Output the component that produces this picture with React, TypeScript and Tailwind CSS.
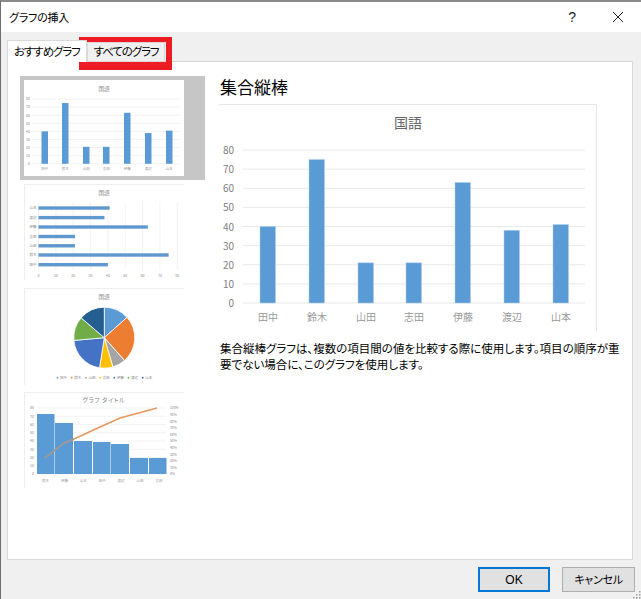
const jp = "font-['Noto_Sans_CJK_JP','Noto_Sans',sans-serif] [font-feature-settings:'palt']";
const FONT = "'Noto Sans CJK JP','Noto Sans',sans-serif";
const names = ["田中", "鈴木", "山田", "志田", "伊藤", "渡辺", "山本"];
const vals = [40, 75, 21, 21, 63, 38, 41];
const BLUE = "#5b9bd5";

function MainChart() {
  const y = (v: number) => 302 - v * 1.9125 - 104;
  const xs = [41, 90, 139, 187, 236, 285, 334];
  return (
    <svg width="378" height="226" className="block" fontFamily={FONT}>
      <text x="189" y="23" textAnchor="middle" fontSize="14" fill="#666">国語</text>
      {[0, 10, 20, 30, 40, 50, 60, 70, 80].map((v) => (
        <g key={v}>
          <line x1="24" x2="366" y1={y(v)} y2={y(v)} stroke="#e8e8e8" />
          <text x="15" y={y(v) + 4} textAnchor="end" fontSize="10" fill="#808080">{v}</text>
        </g>
      ))}
      {vals.map((v, i) => (
        <rect key={i} x={xs[i]} y={y(v)} width="15.5" height={v * 1.9125} fill={BLUE} stroke="#a9cdeb" strokeWidth="0.5" />
      ))}
      {names.map((n, i) => (
        <text key={n} x={xs[i] + 8} y="216" textAnchor="middle" fontSize="10" fill="#999">{n}</text>
      ))}
    </svg>
  );
}

function Thumb1() {
  const y = (v: number) => 19 + (80 - v) * 0.81;
  const xs = [17.5, 38, 59, 79, 100, 121, 142];
  return (
    <svg width="160" height="96" className="block bg-white" fontFamily={FONT}>
      <text x="80" y="11" textAnchor="middle" fontSize="5.5" fill="#888">国語</text>
      {[0, 10, 20, 30, 40, 50, 60, 70, 80].map((v) => (
        <g key={v}>
          <line x1="8" x2="156" y1={y(v)} y2={y(v)} stroke="#eeeeee" strokeWidth="0.7" />
          <text x="6" y={y(v) + 1.3} textAnchor="end" fontSize="3.5" fill="#888">{v}</text>
        </g>
      ))}
      {vals.map((v, i) => (
        <rect key={i} x={xs[i]} y={y(v)} width="6.5" height={v * 0.81} fill={BLUE} />
      ))}
      {names.map((n, i) => (
        <text key={n} x={xs[i] + 3.2} y="90" textAnchor="middle" fontSize="3.5" fill="#999">{n}</text>
      ))}
    </svg>
  );
}

function Thumb2() {
  const x = (v: number) => 14.5 + v * 1.735;
  const rows = [24, 33.6, 43, 52.5, 61.8, 71, 80.7];
  const rev = [6, 5, 4, 3, 2, 1, 0];
  return (
    <svg width="160" height="96" className="block bg-white" fontFamily={FONT}>
      <line x1="0" x2="160" y1="0.5" y2="0.5" stroke="#eeeeee" />
      <line x1="0.5" x2="0.5" y1="0" y2="96" stroke="#eeeeee" />
      <text x="80" y="11" textAnchor="middle" fontSize="5.5" fill="#888">国語</text>
      {[0, 10, 20, 30, 40, 50, 60, 70, 80].map((v) => (
        <g key={v}>
          <line x1={x(v)} x2={x(v)} y1="18" y2="86" stroke="#eeeeee" strokeWidth="0.7" />
          <text x={x(v)} y="92.5" textAnchor="middle" fontSize="3.5" fill="#888">{v}</text>
        </g>
      ))}
      {rows.map((r, i) => (
        <g key={r}>
          <rect x={x(0)} y={r - 1.7} width={vals[rev[i]] * 1.735} height="3.4" fill="#5f97cf" />
          <text x="12.5" y={r + 1.3} textAnchor="end" fontSize="3.5" fill="#888">{names[rev[i]]}</text>
        </g>
      ))}
    </svg>
  );
}

function Thumb3() {
  const colors = ["#5b9bd5", "#ed7d31", "#a5a5a5", "#ffc000", "#4472c4", "#70ad47", "#255e91"];
  const total = vals.reduce((a, b) => a + b, 0);
  const cx = 80.3, cy = 49.7, r = 30.5;
  let acc = 0;
  const paths = vals.map((v, i) => {
    const a0 = (acc / total) * 2 * Math.PI;
    acc += v;
    const a1 = (acc / total) * 2 * Math.PI;
    const p = (a: number) => `${cx + r * Math.sin(a)} ${cy - r * Math.cos(a)}`;
    return (
      <path key={i} d={`M${cx} ${cy}L${p(a0)}A${r} ${r} 0 ${a1 - a0 > Math.PI ? 1 : 0} 1 ${p(a1)}Z`} fill={colors[i]} stroke="#fff" strokeWidth="0.8" />
    );
  });
  return (
    <svg width="160" height="97" className="block bg-white" fontFamily={FONT}>
      <line x1="0" x2="160" y1="0.5" y2="0.5" stroke="#eeeeee" />
      <line x1="0.5" x2="0.5" y1="0" y2="97" stroke="#eeeeee" />
      <text x="80" y="11" textAnchor="middle" fontSize="5.5" fill="#888">国語</text>
      {paths}
      {names.map((n, i) => (
        <g key={n}>
          <circle cx={33.5 + i * 14.2} cy="89.7" r="0.9" fill={colors[i]} />
          <text x={36 + i * 14.2} y="91" fontSize="3.5" fill="#888">{n}</text>
        </g>
      ))}
    </svg>
  );
}

function Thumb4() {
  const order = ["鈴木", "伊藤", "山本", "田中", "渡辺", "山田", "志田"];
  const bars = [
    [13, 17.5, 22], [31, 18, 31], [50, 18, 49], [69, 17.5, 50], [87, 18, 52], [106, 18, 66], [125, 17.5, 66],
  ];
  return (
    <svg width="160" height="96" className="block bg-white" fontFamily={FONT}>
      <line x1="0" x2="160" y1="0.5" y2="0.5" stroke="#eeeeee" />
      <line x1="0.5" x2="0.5" y1="0" y2="96" stroke="#eeeeee" />
      <text x="80" y="9.5" textAnchor="middle" fontSize="6" letterSpacing="0.6" fill="#888">グラフ タイトル</text>
      {[0, 10, 20, 30, 40, 50, 60, 70, 80].map((v) => {
        const y = 82 - v * 0.825;
        return (
          <g key={v}>
            <line x1="13" x2="142" y1={y} y2={y} stroke="#eeeeee" strokeWidth="0.7" />
            <text x="10" y={y + 1.3} textAnchor="end" fontSize="3.5" fill="#888">{v}</text>
          </g>
        );
      })}
      {[0, 10, 20, 30, 40, 50, 60, 70, 80, 90, 100].map((v) => (
        <text key={v} x="146" y={82 - v * 0.66 + 1.3} fontSize="3.3" fill="#888">{v}%</text>
      ))}
      {bars.map(([x, w, t]) => (
        <rect key={x} x={x} y={t} width={w} height={82 - t} fill={BLUE} />
      ))}
      <polyline points="21,66 40,51 50,47" fill="none" stroke="#9a9a9a" strokeWidth="2" />
      <polyline points="50,47 76,35 96,26 133,16" fill="none" stroke="#e8965c" strokeWidth="1.4" />
      {order.map((n, i) => (
        <text key={n} x={21.5 + i * 18.9} y="90" textAnchor="middle" fontSize="3.5" fill="#999">{n}</text>
      ))}
    </svg>
  );
}

export default function App() {
  return (
    <div className={`relative flex h-[599px] w-[641px] flex-col overflow-hidden border-t-2 border-l border-t-[#8a8a8a] border-l-[#6e6e6e] bg-[#f0f0f0] text-black ${jp}`}>
      <div className="flex h-[30px] shrink-0 items-center bg-white pl-2">
        <span className="whitespace-nowrap text-[11px] tracking-[-0.2px]">グラフの挿入</span>
        <span className="ml-auto mr-[36px] font-['Liberation_Sans',sans-serif] text-[14px] text-[#222]">?</span>
        <svg width="12" height="12" viewBox="0 0 12 12" className="mr-[17px]">
          <path d="M1 1L11 11M11 1L1 11" stroke="#222" strokeWidth="1" fill="none" />
        </svg>
      </div>

      <div className="flex h-[29px] shrink-0 items-end pl-[6px]">
        <div className="relative z-10 -mb-px flex h-[22px] w-[80px] items-center whitespace-nowrap border border-b-0 border-[#d9d9d9] bg-white pl-[6px] text-[11.5px] tracking-[-1.1px]">
          おすすめグラフ
        </div>
        <div className="flex h-[19px] w-[78px] items-center justify-center whitespace-nowrap border border-b-0 border-[#d9d9d9] text-[11.5px] tracking-[-1.1px]">
          すべてのグラフ
        </div>
      </div>

      <div className="ml-[6px] mr-2 flex h-[499px] shrink-0 border border-[#d9d9d9] bg-white pl-[12px] pt-[14px]">
        <div className="flex w-[185px] shrink-0 flex-col">
          <div className="flex h-[104px] items-start bg-[#c6c6c6] pl-1 pt-1">
            <Thumb1 />
          </div>
          <div className="ml-1 mt-1"><Thumb2 /></div>
          <div className="ml-1 mt-2"><Thumb3 /></div>
          <div className="ml-1 mt-[7px]"><Thumb4 /></div>
        </div>
        <div className="ml-[14px] flex flex-col">
          <h2 className="h-[28px] pl-px text-[17px] leading-[22px] font-normal">集合縦棒</h2>
          <div className="w-[378px] border-t border-r border-[#e6e6e6]">
            <MainChart />
          </div>
          <p className="mt-[9px] whitespace-nowrap pl-px text-[11.5px] leading-4">
            集合縦棒グラフは、複数の項目間の値を比較する際に使用します。項目の順序が重
            <br />
            要でない場合に、このグラフを使用します。
          </p>
        </div>
      </div>

      <div className="flex flex-1 items-start justify-end gap-3 pr-[6px] pt-[7px]">
        <button className="flex h-[25px] w-[72px] items-center justify-center border-2 border-[#0078d7] bg-[#e1e1e1] font-['Liberation_Sans',sans-serif] text-xs">OK</button>
        <button className="flex h-[25px] w-[73px] items-center justify-center border border-[#adadad] bg-[#e1e1e1] text-[11px] tracking-[-0.3px]">キャンセル</button>
      </div>

      <div className="pointer-events-none absolute left-[78px] top-[35px] h-[33px] w-[93px] border-[5px] border-b-[8px] border-r-[6px] border-l-[6px] border-[#ed1c24]" />
      <svg width="8" height="8" className="absolute bottom-0 right-0" fill="#a0a0a0">
        <rect x="6" y="0" width="1.5" height="1.5" />
        <rect x="3" y="3" width="1.5" height="1.5" />
        <rect x="6" y="3" width="1.5" height="1.5" />
        <rect x="0" y="6" width="1.5" height="1.5" />
        <rect x="3" y="6" width="1.5" height="1.5" />
        <rect x="6" y="6" width="1.5" height="1.5" />
      </svg>
    </div>
  );
}
